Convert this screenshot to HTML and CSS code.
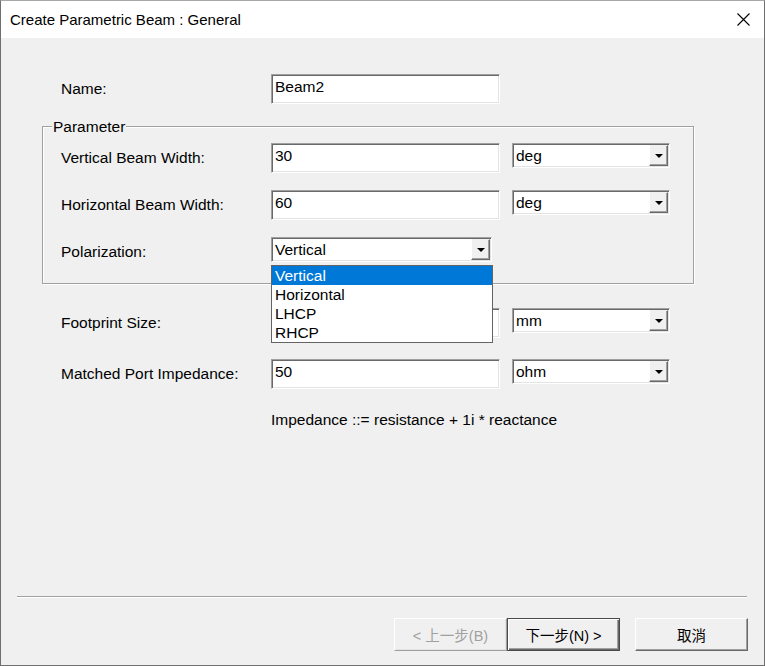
FILE: index.html
```html
<!DOCTYPE html>
<html lang="en">
<head>
<meta charset="utf-8">
<title>Create Parametric Beam : General</title>
<link rel="stylesheet" href="styles.css">
</head>
<body>
<div class="window">
  <div class="titlebar">
    <span class="title">Create Parametric Beam : General</span>
    <svg class="close" width="13" height="13" viewBox="0 0 13 13"><path d="M0.5 0.5L12.5 12.5M12.5 0.5L0.5 12.5" stroke="#000" stroke-width="1.1" fill="none"/></svg>
  </div>
  <div class="content">
    <div class="row outer">
      <span class="label">Name:</span>
      <div class="edit">Beam2</div>
    </div>

    <div class="group">
      <span class="legend">Parameter</span>
      <div class="row">
        <span class="label">Vertical Beam Width:</span>
        <div class="edit">30</div>
        <div class="combo"><span class="val">deg</span><span class="drop"><span class="tri"></span></span></div>
      </div>
      <div class="row">
        <span class="label">Horizontal Beam Width:</span>
        <div class="edit">60</div>
        <div class="combo"><span class="val">deg</span><span class="drop"><span class="tri"></span></span></div>
      </div>
      <div class="row">
        <span class="label">Polarization:</span>
        <div class="pol">
          <div class="combo wide"><span class="val">Vertical</span><span class="drop"><span class="tri"></span></span></div>
          <ul class="list">
            <li class="sel">Vertical</li>
            <li>Horizontal</li>
            <li>LHCP</li>
            <li>RHCP</li>
          </ul>
        </div>
      </div>
    </div>

    <div class="row outer after-group">
      <span class="label">Footprint Size:</span>
      <div class="edit"></div>
      <div class="combo"><span class="val">mm</span><span class="drop"><span class="tri"></span></span></div>
    </div>
    <div class="row outer next">
      <span class="label">Matched Port Impedance:</span>
      <div class="edit">50</div>
      <div class="combo"><span class="val">ohm</span><span class="drop"><span class="tri"></span></span></div>
    </div>
    <div class="note">Impedance ::= resistance + 1i * reactance</div>

    <div class="footer">
      <div class="sep"></div>
      <div class="buttons">
        <div class="btn disabled">&lt; 上一步(B)</div>
        <div class="btn default">下一步(N) &gt;</div>
        <div class="btn cancel">取消</div>
      </div>
    </div>
  </div>
</div>
</body>
</html>
```

FILE: styles.css
```css
* { box-sizing: border-box; }
html, body { margin: 0; padding: 0; }
body {
  width: 765px;
  height: 666px;
  overflow: hidden;
  background: #f0f0f0;
  font-family: "Liberation Sans", Arial, "Noto Sans CJK TC", sans-serif;
  font-size: 15.5px;
  color: #000;
}
.window {
  width: 765px;
  height: 666px;
  border: 1px solid #6f6f6f;
  border-top-color: #a8a8a8;
  display: flex;
  flex-direction: column;
  background: #f0f0f0;
}
.titlebar {
  height: 37px;
  flex: none;
  background: #fff;
  display: flex;
  align-items: center;
  justify-content: space-between;
  padding: 0 14px 0 9px;
}
.title { font-size: 15px; }
.close { display: block; }

.content {
  flex: 1;
  display: flex;
  flex-direction: column;
  padding-top: 36px;
}

.row {
  display: grid;
  grid-template-columns: 198px 229px 158px;
  column-gap: 12px;
  height: 30px;
  align-items: center;
}
.row.outer { margin-left: 60px; }
.row.after-group { margin-top: 24px; }
.row.next { margin-top: 21px; }

.label { white-space: nowrap; }

.edit {
  height: 30px;
  background: #fff;
  border: 1px solid;
  border-color: #a0a0a0 #fff #fff #a0a0a0;
  box-shadow: inset 1px 1px 0 #696969, inset -1px -1px 0 #e3e3e3;
  padding: 2px 3px;
  line-height: 20px;
}

.combo {
  align-self: start;
  height: 25px;
  background: #fff;
  border: 1px solid;
  border-color: #a0a0a0 #fff #fff #a0a0a0;
  box-shadow: inset 1px 1px 0 #696969, inset -1px -1px 0 #e3e3e3;
  padding: 1px;
  display: flex;
}
.combo.wide { width: 221px; }
.combo .val {
  flex: 1;
  padding-left: 2px;
  line-height: 21px;
}
.drop {
  flex: none;
  width: 19px;
  background: #f0f0f0;
  border: 1px solid;
  border-color: #f0f0f0 #696969 #696969 #fff;
  box-shadow: inset -1px -1px 0 #a0a0a0;
  display: flex;
  align-items: center;
  justify-content: center;
}
.tri {
  width: 0;
  height: 0;
  border-left: 4px solid transparent;
  border-right: 4px solid transparent;
  border-top: 4px solid #000;
  margin-top: 1px;
}

.group {
  position: relative;
  margin: 22px 0 0 41px;
  width: 652px;
  border: 1px solid #a0a0a0;
  box-shadow: inset 1px 1px 0 #fff, 1px 1px 0 #fff;
  padding: 16px 0 16px 18px;
  display: flex;
  flex-direction: column;
  gap: 17px;
}
.legend {
  position: absolute;
  top: -9px;
  left: 9px;
  padding: 0 1px;
  line-height: 18px;
  background: #f0f0f0;
}

.pol {
  position: relative;
  align-self: start;
  height: 25px;
}
.list {
  position: absolute;
  z-index: 5;
  top: 28px;
  left: 0;
  width: 222px;
  margin: 0;
  padding: 0;
  list-style: none;
  background: #fff;
  border: 1px solid #646464;
}
.list li {
  height: 19px;
  line-height: 19px;
  padding-left: 3px;
}
.list li.sel {
  background: #0078d7;
  color: #fff;
}

.note {
  margin: 21px 0 0 270px;
  line-height: 20px;
}

.footer {
  margin-top: auto;
}
.sep {
  height: 2px;
  margin: 0 17px 0 16px;
  border-top: 1px solid #a0a0a0;
  border-bottom: 1px solid #fff;
}
.buttons {
  display: flex;
  justify-content: flex-end;
  padding: 20px 16px 14px 0;
}
.btn {
  width: 113px;
  height: 33px;
  display: flex;
  align-items: center;
  justify-content: center;
  background: #f0f0f0;
  border: 1px solid;
  border-color: #fff #696969 #696969 #fff;
  box-shadow: inset -1px -1px 0 #a0a0a0;
  font-size: 14.5px;
}
.btn.disabled {
  color: #a0a0a0;
  border-color: #fff #a0a0a0 #a0a0a0 #fff;
  box-shadow: inset -1px -1px 0 #e3e3e3;
}
.btn.default {
  border: 1px solid #4a4a4a;
  box-shadow: inset 1px 1px 0 #fff, inset -1px -1px 0 #696969, inset -2px -2px 0 #a0a0a0;
}
.btn.cancel { margin-left: 15px; }
```
